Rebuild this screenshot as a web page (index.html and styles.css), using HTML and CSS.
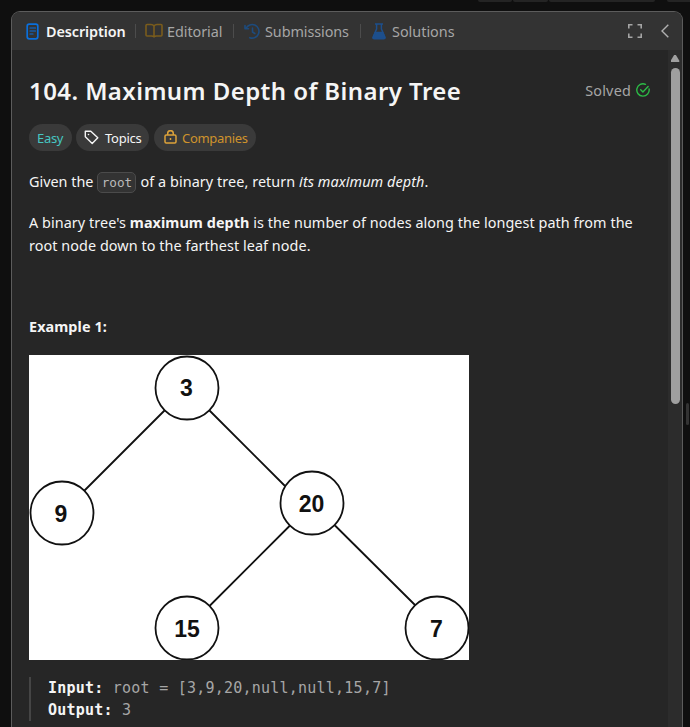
FILE: index.html
```html
<!DOCTYPE html>
<html lang="en">
<head>
<meta charset="utf-8">
<title>Maximum Depth of Binary Tree</title>
<link rel="stylesheet" href="styles.css">
</head>
<body>
<div class="topbar"><i class="seg first"></i><i class="seg second"></i><i class="seg third"></i><i class="seg fourth"></i></div>
<main class="panel">
  <nav class="tabs">
    <div class="tab active t-description">
      <svg width="14" height="18" viewBox="0 0 14 18" fill="none" stroke="#0a6fdc" stroke-width="1.7"><rect x="1.2" y="1.2" width="10.6" height="14.6" rx="2"/><path d="M4 5h5.5M4 8h5.5M4 11h3" stroke-width="1.2" stroke-linecap="round"/></svg>
      <span>Description</span>
    </div>
    <i class="sep"></i>
    <div class="tab t-editorial">
      <svg width="18" height="16" viewBox="0 0 18 16" fill="none" stroke="#7a5c1c" stroke-width="1.6" stroke-linejoin="round"><path d="M9 3.2Q8 1.500 6 1.500H2Q1 1.500 1 2.500v9.500Q1 13 2 13H6.500Q8.500 13 9 14Q9.500 13 11.500 13H16Q17 13 17 12V2.500Q17 1.500 16 1.500H12Q10 1.500 9 3.200V14"/></svg>
      <span>Editorial</span>
    </div>
    <i class="sep"></i>
    <div class="tab t-submissions">
      <svg width="17" height="17" viewBox="0 0 17 17" fill="none" stroke="#1d4b7d" stroke-width="1.6" stroke-linecap="round" stroke-linejoin="round"><path d="M1 2.500v3.300h3.500M2 5.500A6.800 6.800 0 1 1 5.800 14.700M8.500 5v4l2.300 1.500"/></svg>
      <span>Submissions</span>
    </div>
    <i class="sep"></i>
    <div class="tab t-solutions">
      <svg width="14" height="17" viewBox="0 0 14 17" fill="none" stroke="#1d4f8c" stroke-width="1.5" stroke-linejoin="round"><path d="M3 1h8M4.600 1v5L1 14.200Q.8 15.800 2.300 15.800H11.700Q13.200 15.800 13 14.200L9.400 6V1"/><path d="M3.200 9.500h7.600l2 5.500H1.200z" fill="#1d4f8c"/></svg>
      <span>Solutions</span>
    </div>
    <div class="actions">
      <svg width="14" height="14" viewBox="0 0 14 14" fill="none" stroke="#a5a5a5" stroke-width="1.6"><path d="M.8 4.500V.8h3.700M9.500.8h3.700v3.700M13.200 9.500v3.700H9.500M4.500 13.200H.8V9.500"/></svg>
      <svg width="8" height="14" viewBox="0 0 8 14" fill="none" stroke="#b0b0b0" stroke-width="1.4"><path d="M7.300.8 1 7l6.300 6.200"/></svg>
    </div>
  </nav>
  <div class="body">
    <section class="content">
      <header class="heading">
        <h1>104. Maximum Depth of Binary Tree</h1>
        <div class="solved"><span>Solved</span>
          <svg width="14" height="14" viewBox="0 0 14 14" fill="none" stroke="#2cbb46" stroke-width="1.4" stroke-linecap="round" stroke-linejoin="round"><path d="M13.100 6A6.200 6.200 0 1 1 9.500 1.300M4.700 6.800l2.200 2.100 5.200-5.400"/></svg>
        </div>
      </header>
      <div class="tags">
        <span class="tag easy">Easy</span>
        <span class="tag topics"><svg width="15" height="15" viewBox="0 0 15 15" fill="none" stroke="#f5f5f5" stroke-width="1.4" stroke-linejoin="round"><path d="M1.300 1.300h5.500l7 6.500-5.600 5.700L1.300 6.800z"/><circle cx="4.500" cy="4.500" r=".8" fill="#f5f5f5" stroke="none"/></svg><span>Topics</span></span>
        <span class="tag companies"><svg width="13" height="14" viewBox="0 0 13 14" fill="none" stroke="#dda23a" stroke-width="1.5"><rect x="1" y="5" width="11" height="8" rx="1.200"/><path d="M3.700 5V3.500a2.800 2.800 0 0 1 5.600 0V5M6.500 8v2"/></svg><span>Companies</span></span>
      </div>
      <p class="intro"><span>Given the</span> <code>root</code> <span class="rest">of a binary tree, return <em>its maximum depth</em>.</span></p>
      <p class="definition">A binary tree's <strong>maximum depth</strong> is the number of nodes along the longest path from the<br>root node down to the farthest leaf node.</p>
      <p class="example">Example 1:</p>
      <svg class="tree" width="440" height="305" viewBox="0 0 440 305">
        <g stroke="#111" stroke-width="1.800" fill="none">
          <path d="M135.500 55.500 55 136M180.500 55.500 256 131M261 170.500 180.500 251M306 170.500 386 250"/>
          <circle cx="158" cy="33" r="31.500"/><circle cx="33" cy="158" r="31.500"/><circle cx="283" cy="148" r="31.500"/><circle cx="158" cy="273" r="31.500"/><circle cx="408" cy="273" r="31.500"/>
        </g>
        <g class="values"><text x="157.500" y="41">3</text><text x="32" y="167">9</text><text x="282.500" y="157">20</text><text x="158" y="282">15</text><text x="407.500" y="282">7</text></g>
      </svg>
      <pre><strong>Input:</strong> root = [3,9,20,null,null,15,7]
<strong>Output:</strong> 3</pre>
    </section>
    <div class="scroll"><i class="arrow"></i><i class="thumb"></i></div>
  </div>
</main>
<div class="grip"></div>
</body>
</html>
```
FILE: styles.css
```css
* { box-sizing: border-box; }
body { margin: 0; width: 690px; height: 727px; overflow: hidden; background: #0f0f0f; color: #f5f5f5; font: 14.4px/23px "Noto Sans", sans-serif; display: grid; grid-template: 11px 716px / 11px 672px 7px; }
.topbar { grid-column: 1 / 4; display: flex; gap: 1px; padding-left: 478px; height: 2px; }
.seg { flex: none; background: #242424; border-radius: 0 0 3px 3px; }
.first { width: 34px; }
.second { width: 35px; }
.third { width: 106px; }
.fourth { width: 30px; margin-left: 11px; }
.panel { grid-column: 2; height: 730px; border: 1px solid #5c5c5c; border-bottom: 0; border-radius: 9px 9px 0 0; background: #262626; overflow: hidden; }
.tabs { height: 38px; background: #333; display: flex; align-items: center; padding-left: 14px; color: #a6a6a6; }
.tab { display: flex; align-items: center; white-space: nowrap; height: 38px; }
.tab svg { flex: none; }
.tab.active { color: #f5f5f5; font-weight: 600; }
.t-description { width: 109px; gap: 6px; letter-spacing: -.08px; }
.t-description svg { margin-top: 1px; }
.t-editorial { width: 97px; padding-left: 9px; gap: 4px; letter-spacing: -.05px; }
.t-submissions { width: 126px; padding-left: 10px; gap: 4px; letter-spacing: -.08px; }
.t-solutions { width: 111px; padding-left: 11px; gap: 6px; letter-spacing: 0; }
.sep { width: 1px; height: 14px; background: #4c4c4c; }
.actions { margin-left: auto; display: flex; align-items: center; gap: 19px; padding-right: 13px; }
.body { display: flex; height: 680px; }
.content { width: 656px; padding: 24px 18px 0 17px; }
.heading { display: flex; justify-content: space-between; height: 34px; align-items: center; }
h1 { margin: 0; font-size: 24px; line-height: 34px; font-weight: 600; white-space: nowrap; letter-spacing: .42px; }
.solved { display: flex; align-items: center; gap: 5px; margin-top: -2px; color: #a6a6a6; letter-spacing: .2px; }
.tags { display: flex; gap: 4px; margin-top: 16px; height: 27px; }
.tag { display: flex; align-items: center; border-radius: 14px; background: #3a3a3a; font-size: 13px; height: 27px; padding: 1px 8px 0; white-space: nowrap; }
.tag svg { flex: none; margin-top: -2px; }
.easy { width: 43px; color: #46c6c2; letter-spacing: -.3px; }
.topics { width: 73px; gap: 5px; letter-spacing: -.25px; }
.topics span { margin-left: 1px; }
.companies { width: 102px; margin-left: 1px; padding-left: 10px; gap: 5px; color: #cf932c; letter-spacing: -.3px; }
p { margin: 0; white-space: nowrap; }
.intro { margin-top: 19px; height: 23px; display: flex; align-items: center; }
code { width: 39px; height: 21px; margin: 1px 4px 0; border: 1px solid #4b4b4b; border-radius: 5px; background: #333; color: #b9b9b9; font: 12.7px/19px "DejaVu Sans Mono", monospace; text-align: center; }
.rest { letter-spacing: .07px; }
.definition { margin-top: 18px; letter-spacing: .06px; }
.example { margin-top: 58px; font-weight: 700; letter-spacing: .08px; }
.tree { display: block; margin-top: 17px; background: #fff; }
.values { font: bold 23px "Liberation Sans", sans-serif; fill: #111; text-anchor: middle; }
pre { margin: 17px 0 0; height: 44px; border-left: 2px solid #454545; padding-left: 17px; font: 15px/22px "DejaVu Sans Mono", monospace; letter-spacing: .23px; color: #a6a6a6; }
pre strong { color: #f5f5f5; }
.scroll { width: 14px; background: #2c2c2c; display: flex; flex-direction: column; align-items: center; padding-top: 5px; }
.arrow { width: 9px; height: 7px; background: #9f9f9f; clip-path: polygon(40% 0, 60% 0, 100% 85%, 95% 100%, 5% 100%, 0 85%); }
.thumb { width: 9px; height: 336px; margin-top: 6px; border-radius: 5px; background: #9f9f9f; }
.grip { grid-column: 3; margin: 392px 0 0 3px; width: 3px; height: 22px; border-radius: 2px; background: #333; }
```
